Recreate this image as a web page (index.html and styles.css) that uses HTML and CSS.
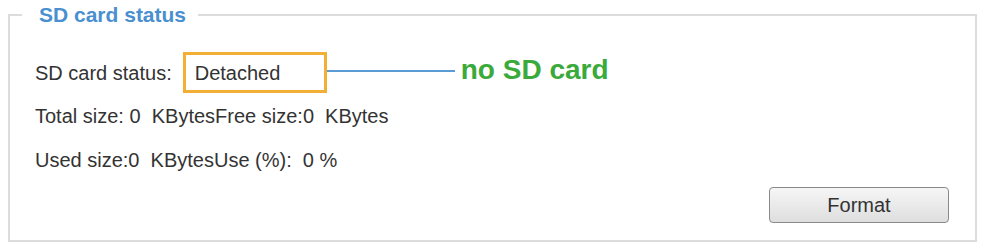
FILE: index.html
```html
<!DOCTYPE html>
<html>
<head>
<meta charset="utf-8">
<link rel="stylesheet" href="styles.css">
</head>
<body>
<fieldset class="panel">
  <legend class="panel-title">SD card status</legend>
  <div class="row row-status">
    <span class="label">SD card status:</span>
    <span class="status-box">Detached</span>
    <span class="connector"></span>
    <span class="note">no SD card</span>
  </div>
  <div class="row row-info">Total size: 0&nbsp; KBytesFree size:0&nbsp; KBytes</div>
  <div class="row row-info row-used">Used size:0&nbsp; KBytesUse (%):&nbsp; 0 %</div>
  <div class="actions">
    <button class="btn" type="button">Format</button>
  </div>
</fieldset>
</body>
</html>
```
FILE: styles.css
```css
html, body {
  margin: 0;
  padding: 0;
  background: #ffffff;
}
body {
  font-family: "Liberation Sans", Arial, sans-serif;
  color: #333333;
  width: 982px;
  height: 243px;
  overflow: hidden;
}
.panel {
  margin: 3px 5px 0 8px;
  border: 2px solid #dcdcdc;
  padding: 0 26px 15px 25px;
  min-width: 0;
  height: 220px;
  box-sizing: content-box;
}
.panel-title {
  margin-left: -13px;
  padding: 0 12px 0 17px;
  font-size: 21px;
  line-height: 24px;
  font-weight: bold;
  color: #4a8fd0;
}
.row {
  display: flex;
  align-items: center;
  font-size: 20px;
  line-height: 24px;
}
.row-status {
  margin-top: 25px;
  height: 41px;
}
.label {
  margin-right: 11px;
}
.status-box {
  box-sizing: border-box;
  width: 144px;
  height: 41px;
  border: 3px solid #f2ae35;
  padding: 0 9px;
  display: flex;
  align-items: center;
}
.connector {
  width: 128px;
  height: 2px;
  background: #5b9bd5;
  margin-top: -4px;
}
.note {
  margin-left: 6px;
  font-size: 28px;
  font-weight: bold;
  color: #3aaa3a;
  margin-top: -5px;
}
.row-info {
  margin-top: 11px;
  height: 24px;
}
.row-used {
  margin-top: 20px;
}
.actions {
  display: flex;
  justify-content: flex-end;
  margin-top: 15px;
}
.btn {
  width: 180px;
  height: 36px;
  border: 1px solid #8a8a8a;
  border-radius: 4px;
  background: linear-gradient(#f6f6f6, #dedede);
  font-family: "Liberation Sans", Arial, sans-serif;
  font-size: 20px;
  color: #333333;
  padding: 0;
}
```
